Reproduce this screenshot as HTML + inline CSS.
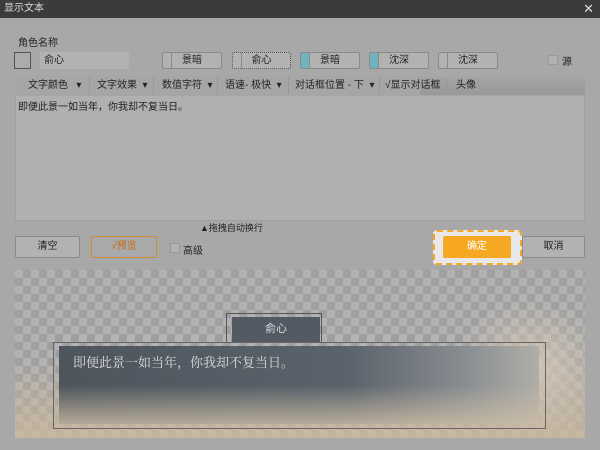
<!DOCTYPE html>
<html><head><meta charset="utf-8"><style>
*{margin:0;padding:0;box-sizing:border-box}
body{width:600px;height:450px;background:#a8a8a8;font-family:"Liberation Sans","Noto Sans CJK SC",sans-serif;font-size:10px;color:#222;position:relative;overflow:hidden}
.a{position:absolute}
.btn{position:absolute;height:17px;border:1px solid #8a8a8a;background:#b2b2b2;text-align:center;line-height:15px;border-radius:2px}
.btn i{position:absolute;left:0;top:0;bottom:0;width:9px;border-right:1px solid #8a8a8a}
.tb{position:absolute;top:76px;height:20px;line-height:20px;font-size:10px}
.sep{position:absolute;top:77px;width:1px;height:18px;background:#999}
</style></head><body>
<div class="a" style="left:0;top:0;width:600px;height:18px;background:#3b3b3b;color:#ddd;line-height:18px;padding-left:4px">显示文本<span style="position:absolute;right:6px;font-size:13px">✕</span></div>
<div class="a" style="left:18px;top:34px">角色名称</div>
<div class="a" style="left:14px;top:52px;width:17px;height:17px;border:1px solid #555;background:#ababab"></div>
<div class="a" style="left:40px;top:52px;width:89px;height:17px;background:#b2b2b2;padding-left:4px;line-height:17px">俞心</div>
<div class="btn" style="left:162px;top:52px;width:60px"><i></i>景暗</div>
<div class="btn" style="left:232px;top:52px;width:59px;border:1px dotted #555"><i></i>俞心</div>
<div class="btn" style="left:300px;top:52px;width:60px"><i style="background:#6fb3bc"></i>景暗</div>
<div class="btn" style="left:369px;top:52px;width:60px"><i style="background:#6fb3bc"></i>沈深</div>
<div class="btn" style="left:438px;top:52px;width:60px"><i></i>沈深</div>
<div class="a" style="left:548px;top:55px;width:10px;height:10px;background:#b2b2b2;border:1px solid #9a9a9a"></div>
<div class="a" style="left:562px;top:53px">源</div>
<div class="a" style="left:15px;top:76px;width:570px;height:145px;background:#b0b0b0;border:1px solid #a0a0a0"></div>
<div class="a" style="left:15px;top:76px;width:570px;height:20px;background:#a6a6a6"></div>
<div class="a" style="left:420px;top:77px;width:165px;height:18px;background:linear-gradient(#a4a4a4,#999)"></div>
<div class="sep" style="left:89px"></div><div class="sep" style="left:153px"></div><div class="sep" style="left:217px"></div><div class="sep" style="left:288px"></div><div class="sep" style="left:379px"></div><div class="sep" style="left:447px"></div>
<div class="tb" style="left:28px">文字颜色 &nbsp;&nbsp;▾</div>
<div class="tb" style="left:97px">文字效果 &nbsp;▾</div>
<div class="tb" style="left:162px">数值字符 &nbsp;▾</div>
<div class="tb" style="left:225px">语速- 极快 &nbsp;▾</div>
<div class="tb" style="left:295px">对话框位置 - 下 &nbsp;▾</div>
<div class="tb" style="left:385px">√显示对话框</div>
<div class="tb" style="left:456px">头像</div>
<div class="a" style="left:18px;top:98px">即便此景一如当年，你我却不复当日。</div>
<div class="a" style="left:200px;top:221px;font-size:9px">▲拖拽自动换行</div>
<div class="btn" style="left:15px;top:236px;width:65px;height:22px;line-height:20px">清空</div>
<div class="btn" style="left:91px;top:236px;width:66px;height:22px;line-height:20px;border-color:#d08a3a;color:#c86a10;background:#aaa">√预览</div>
<div class="a" style="left:170px;top:243px;width:10px;height:10px;background:#b2b2b2;border:1px solid #9a9a9a"></div>
<div class="a" style="left:183px;top:242px">高级</div>
<div class="a" style="left:433px;top:230px;width:89px;height:35px;border:2px dashed #f5a623;background:#e8e8e8;border-radius:4px"></div>
<div class="a" style="left:443px;top:236px;width:68px;height:22px;background:#f7a823;color:#fff;text-align:center;line-height:22px;border-radius:2px">确定</div>
<div class="btn" style="left:522px;top:236px;width:63px;height:22px;line-height:20px">取消</div>
<div class="a" style="left:15px;top:270px;width:570px;height:168px;background-color:#b3b3b3;background-image:linear-gradient(45deg,#9f9f9f 25%,transparent 25%,transparent 75%,#9f9f9f 75%),linear-gradient(45deg,#9f9f9f 25%,transparent 25%,transparent 75%,#9f9f9f 75%);background-size:16px 16px;background-position:0 0,8px 8px"></div>
<div class="a" style="left:15px;top:360px;width:570px;height:78px;background:linear-gradient(rgba(200,180,150,0) ,rgba(205,185,155,.8))"></div>
<div class="a" style="left:450px;top:300px;width:135px;height:138px;background:radial-gradient(ellipse at 60% 50%,rgba(215,200,180,.9),rgba(200,180,150,0) 70%)"></div>
<div class="a" style="left:226px;top:313px;width:96px;height:30px;border:1px solid #555"></div>
<div class="a" style="left:232px;top:317px;width:88px;height:25px;background:#535a63;color:#ddd;text-align:center;line-height:24px;font-size:11px">俞心</div>
<div class="a" style="left:53px;top:342px;width:493px;height:87px;border:1px solid #666"></div>
<div class="a" style="left:59px;top:346px;width:480px;height:78px;background:linear-gradient(90deg,#4e555d,#5a626b 60%,#8a8e92 85%,#b0aea8);"></div>
<div class="a" style="left:59px;top:385px;width:480px;height:39px;background:linear-gradient(rgba(200,185,160,0),rgba(205,190,165,.8))"></div>
<div class="a" style="left:73px;top:352px;color:#ddd;font-size:13px;font-family:'Noto Serif CJK SC',serif">即便此景一如当年，你我却不复当日。</div>
<div class="a" style="left:0;top:440px;width:600px;height:10px;background:#a8a8a8"></div>
</body></html>
